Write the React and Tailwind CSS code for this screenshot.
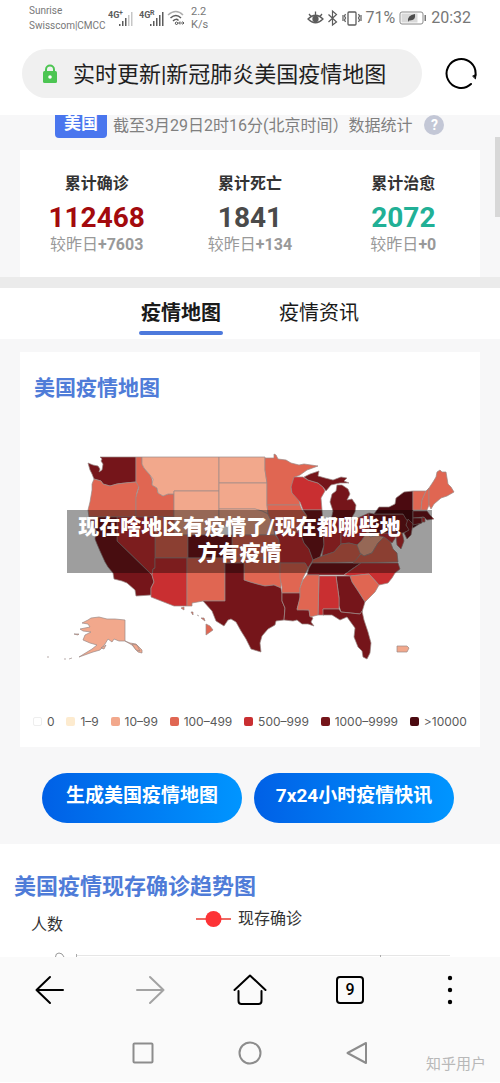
import React, { useState } from 'react';

const stats = [
  { label: '累计确诊', value: '112468', change: '+7603', color: 'text-[#a30a0d]' },
  { label: '累计死亡', value: '1841', change: '+134', color: 'text-[#4a4a4a]' },
  { label: '累计治愈', value: '2072', change: '+0', color: 'text-[#21b096]' },
];

const legend = [
  { label: '0', color: 'bg-white border border-[#eeeeee]' },
  { label: '1–9', color: 'bg-[#fdebcf]' },
  { label: '10–99', color: 'bg-[#f2a88c]' },
  { label: '100–499', color: 'bg-[#e06652]' },
  { label: '500–999', color: 'bg-[#c92f31]' },
  { label: '1000–9999', color: 'bg-[#75151a]' },
  { label: '>10000', color: 'bg-[#4b0a10]' },
];

const C10 = '#f2a88c';
const C100 = '#e06652';
const C500 = '#c92f31';
const C1000 = '#75151a';
const C10000 = '#4b0a10';

const states = [
  ['WA', C1000, 'M88 463L93 465 98 466 100 469 99 472 102 470 103 464 101 461 102 459 100 457H136V482L125 483 117 484 110 486 103 484 101 481 94 479 92 474 90 470Z'],
  ['OR', C100, 'M94 479L101 481 103 484 110 486 117 484 125 483 136 482 139 486 137 492 136 497V517H89L88 510 90 502 92 490 92 484Z'],
  ['ID', C100, 'M136 457H142V464L144 468 150 475 152 479 152 485 157 488 158 493 163 496 168 494 174 494V517H136V497L139 487 136 482Z'],
  ['MT', C10, 'M142 457H219V491H174V494L168 494 163 496 158 493 157 488 152 485 153 479 150 475 144 468 142 464Z'],
  ['WY', C10, 'M174 491H219V535H174Z'],
  ['ND', C10, 'M219 457H265L265 470 267 483H219Z'],
  ['SD', C10, 'M219 483H267L267 505 268 514 262 511 255 509H219Z'],
  ['NE', C10, 'M219 509H255L262 511 268 514 272 522 275 535H232V526H219Z'],
  ['KS', C100, 'M232 535H275L279 540V558H232Z'],
  ['UT', C100, 'M155 517H174V535H188V558H155Z'],
  ['CO', C1000, 'M188 535H232V558H188Z'],
  ['NV', C500, 'M117 517H155V568L153 569 152 575 117 541Z'],
  ['CA', C1000, 'M89 517H117V541L152 575 154 582 151 588 151 595 136 596 135 590 127 583 122 581 114 579 113 573 108 567 105 562 100 551 97 544 95 539 96 530 91 522Z'],
  ['AZ', C500, 'M155 558H187V606H174L151 597 151 588 154 582 152 575 153 569 155 568Z'],
  ['NM', C100, 'M187 558H225V601H203L192 603V606H187Z'],
  ['OK', C100, 'M225 558H280L281 570V588L274 585 265 586 257 584 250 582 244 580V563H225Z'],
  ['TX', C1000, 'M225 563H244V580L250 582 257 584 265 586 274 585 281 588 282 593V601L285 608 284 620 276 621 275 625 268 629 262 636 260 643 261 652 251 649 246 639 241 631 236 622 231 619 228 620 224 626 216 621 212 611 203 601H225Z'],
  ['MN', C100, 'M265 458H274V454L276 455 278 459 286 460 291 463 299 465 304 464 318 466 307 470 300 475 295 477 295 481 291 487 292 493 299 500 300 505H267L267 483 265 470Z'],
  ['IA', C100, 'M267 505H300L302 510 307 516 304 525 301 533 275 534 272 522 268 514Z'],
  ['MO', C500, 'M275 533L300 532 304 543 309 549 313 560 308 568 305 563H280L279 540Z'],
  ['AR', C100, 'M280 563H305L308 568 303 578 300 588V593H282V587L280 578Z'],
  ['LA', C1000, 'M282 593H300L300 599 297 609 309 610 310 616 313 618 311 622 314 626 308 624 302 624 297 620 293 621 284 620 285 608 282 601Z'],
  ['WI', C500, 'M294 477L303 477 308 480 318 483 323 487 325 491 321 498 322 510H303L300 502 292 493 291 487Z'],
  ['MI upper', C1000, 'M304 477L310 474 319 471 318 476 325 478 333 480 341 477 347 478 344 481 349 483 340 483 331 485 326 491 323 487 318 483 308 480Z'],
  ['MI lower', C1000, 'M337 485L342 485 348 489 350 494 347 500 352 499 356 505 355 512 351 519 331 520 333 511 330 502 332 494 336 491Z'],
  ['IL', C1000, 'M303 510H322L324 545 320 557 313 560 309 549 304 543 300 532 304 525 307 516Z'],
  ['IN', C500, 'M323 519H341V544L334 552 322 556 324 545Z'],
  ['OH', C500, 'M341 519L352 520 360 517 369 513V529L362 540 357 545 349 543 341 544Z'],
  ['KY', C100, 'M312 563L313 560 322 556 334 552 341 544 349 543 357 545 361 553 355 562Z'],
  ['TN', C1000, 'M312 563H361L352 569 344 575H307L309 568Z'],
  ['WV', C10, 'M357 545L362 540 369 529 370 537 380 535 384 537 378 543 372 553 364 556 360 553Z'],
  ['VA', C100, 'M353 563L361 554 364 556 372 553 378 543 384 537 390 541 393 549 397 553 398 562Z'],
  ['MD', C500, 'M370 534L402 532 404 541 401 549 397 545 396 537 392 543 384 537Z'],
  ['NC', C500, 'M361 563H398L400 569 395 573 392 578 388 583 379 585 369 574 350 576 344 575Z'],
  ['SC', C100, 'M350 576L369 574 379 585 375 592 365 602 358 591 352 582Z'],
  ['GA', C1000, 'M336 576H350L352 582 358 591 365 602 362 612 360 614 341 612 339 606V598Z'],
  ['AL', C500, 'M319 576H336L339 598V609H323L324 615H318Z'],
  ['MS', C100, 'M307 575H319L318 615 310 617 309 610H297L300 597V588L303 580Z'],
  ['FL', C1000, 'M323 609H339L341 612 360 614 362 611 364 620 368 632 371 643 370 653 367 659 363 657 362 651 358 647 354 637 355 628 347 617 340 620 332 615 323 615Z'],
  ['PA', C1000, 'M369 513L374 514H406L410 520 406 525 410 530 403 533H369Z'],
  ['NY', C10000, 'M374 514L379 507 389 507 395 504 396 498 404 492 413 491V524L421 523 413 528 406 519 403 514Z'],
  ['NJ', C1000, 'M408 519L413 524 411 535 407 539 404 533 409 530 406 525Z'],
  ['VT', C100, 'M413 491H426L422 500 421 510H413Z'],
  ['NH', C100, 'M426 491L429 488V505L427 510H421L422 500Z'],
  ['ME', C100, 'M429 488L433 482 436 477 437 472 440 470 442 472 446 472 448 484 451 487 454 492 447 496 441 498 434 504 431 509 429 505Z'],
  ['MA', C1000, 'M413 511H427L430 515 434 519 427 520 424 517 413 518Z'],
  ['CT', C1000, 'M413 518H422V523L413 525Z'],
  ['RI', C500, 'M422 517L425 518 425 522 422 522Z'],
  ['AK', C10, 'M82 623L88 620 91 618 99 617 107 619 115 619 125 620V641L130 643 136 644 142 650 142 653 138 652 132 645 125 641 119 641 114 639 112 642 108 639 105 644 100 650 93 652 79 657 92 649 97 645 90 643 83 640 85 635 91 632 83 631 80 629 90 627 88 624Z'],
  ['AK islands', C10, 'M74 634L79 634 78 635ZM101 648L106 645 104 649ZM64 659H66M69 659L72 658M47 657H49M132 644L137 645 140 651 136 650Z'],
  ['HI', C100, 'M181 608L184 607 184 610ZM191 612L193 612 193 615ZM197 615L199 616M201 618L204 618 205 621ZM206 624L210 626 213 630 206 635Z'],
  ['PR', C10, 'M397 646H407L409 648 407 652H397Z'],
];

function UsMap() {
  return (
    <svg viewBox="20 430 460 240" className="block w-full" role="img" aria-label="美国疫情地图">
      {states.map(([name, fill, d]) => (
        <path key={name} d={d} fill={fill} stroke="#9b8a86" strokeWidth="0.7" strokeLinejoin="round" />
      ))}
    </svg>
  );
}

function Signal({ label, sup, faded }) {
  return (
    <svg width="28" height="18" viewBox="0 0 28 18" fill="#5c5c5c">
      <text x="0" y="9" fontSize="9" fontWeight="700" fontFamily="Roboto, sans-serif">{label}</text>
      <text x="11" y="6" fontSize="7" fontWeight="700" fontFamily="Roboto, sans-serif">{sup}</text>
      <path d="M11 15h1.5v2H11zM14 12h1.5v5H14zM17 9h1.5v8H17z" />
      <path d="M20 6h1.5v11H20zM23 3h1.500v14H23z" opacity={faded ? 0.35 : 1} />
    </svg>
  );
}

function StatusBar() {
  return (
    <div className="flex h-9 items-center justify-between pr-[29px] pl-[29px] text-[#777777]">
      <div className="flex items-center">
        <div className="w-[79px] text-[10px] leading-[15px] whitespace-nowrap">
          <div>Sunrise</div>
          <div>Swisscom|CMCC</div>
        </div>
        <Signal label="4G" sup="+" faded />
        <span className="w-[3px]" />
        <Signal label="4G" sup="R" />
        <svg width="20" height="18" viewBox="0 0 20 18" fill="none" stroke="#5c5c5c" strokeWidth="1.500">
          <path d="M1 6Q9 -1 16 6" opacity=".5" />
          <path d="M3.500 9Q9 4 14 9M6 12Q9 9 11.500 11.500" />
          <path d="M8 14l1.500-1 1.500 1-1.500 2zM12 14h5M13 12.500L11.500 14l1.500 1.500M15.500 12.500L17 14l-1.500 1.500" strokeWidth="1" />
        </svg>
        <div className="ml-1 text-[11px] leading-[13px]">
          <div>2.2</div>
          <div>K/s</div>
        </div>
      </div>
      <div className="flex items-center text-base">
        <svg width="56" height="18" viewBox="0 0 56 18" fill="none" stroke="#5c5c5c" strokeWidth="1.300">
          <path d="M1 10Q8.500 2.500 16 10 8.500 17.500 1 10ZM2 5l2 2.500M8.500 2.500v3M15 5l-2 2.500" />
          <circle cx="8.500" cy="10" r="2.500" fill="#5c5c5c" />
          <path d="M21.500 5.500l8 7.500-4 3V2l4 3.500-8 7.500" strokeWidth="1.200" />
          <rect x="41" y="3" width="8" height="13" rx="1" />
          <path d="M38.500 5l-1 2 1 2-1 2 1 2M36 6v6M51.500 5l1 2-1 2 1 2-1 2M54 6v6" strokeWidth="1.200" />
        </svg>
        <span className="ml-[2px]">71%</span>
        <svg width="28" height="14" viewBox="0 0 28 14" className="mx-1">
          <rect x="1" y="1" width="23" height="12" rx="2" fill="#fff" stroke="#8a8a8a" />
          <rect x="2.500" y="2.500" width="16" height="9" fill="#d9d9d9" />
          <path d="M9 11Q8 4 16 3 17 10 10 9.500Z" fill="#4d4d4d" />
          <rect x="25.500" y="4" width="1.500" height="6" fill="#777" />
        </svg>
        <span>20:32</span>
      </div>
    </div>
  );
}

function AddressBar() {
  return (
    <div className="flex items-center pt-[13px] pr-[22px] pb-[17px] pl-[22px]">
      <label className="flex h-[49px] min-w-0 flex-1 items-center rounded-full bg-[#f0f0f0] pl-5">
        <svg width="16" height="20" viewBox="0 0 16 20" className="mr-[15px] shrink-0" aria-hidden="true">
          <path d="M4 9V5.500a4 4 0 0 1 8 0V9" fill="none" stroke="#4cc552" strokeWidth="2" />
          <rect x="1" y="7" width="14" height="12" rx="1.500" fill="#4cc552" />
          <circle cx="8" cy="13" r="1.800" fill="#fff" />
        </svg>
        <input
          type="text"
          aria-label="网址"
          defaultValue="实时更新|新冠肺炎美国疫情地图"
          className="min-w-0 flex-1 bg-transparent pt-[2px] text-[22px] leading-8 text-[#1f1f1f] outline-none"
        />
      </label>
      <button type="button" aria-label="刷新" className="ml-[22px] shrink-0">
        <svg width="34" height="34" viewBox="0 0 34 34" fill="none" stroke="#000" strokeWidth="2" strokeLinecap="round">
          <path d="M27 27A14.500 14.500 0 1 1 31.500 18" />
          <path d="M29 19L32 17.500 31.500 21.500Z" fill="#000" strokeWidth="1" />
        </svg>
      </button>
    </div>
  );
}

function Summary() {
  return (
    <section className="relative">
      <div className="flex items-start pl-[55px]">
        <span className="h-[23px] w-[52px] rounded-b bg-[#4a76ee] text-center text-[17px] leading-4 font-bold text-white">美国</span>
        <p className="ml-[6px] text-base leading-[22px] whitespace-nowrap text-[#808080]">截至3月29日2时16分(北京时间）数据统计</p>
        <button type="button" aria-label="说明" className="ml-3 h-5 w-5 rounded-full bg-[#c3c7d6] text-sm leading-5 font-bold text-white">?</button>
      </div>
      <div className="mx-5 mt-3 grid grid-cols-3 bg-white pt-[22px] pb-[21px]">
        {stats.map((s) => (
          <div key={s.label} className="text-center">
            <div className="text-base leading-6 font-bold text-[#333333]">{s.label}</div>
            <div className={`pt-[2px] text-[28px] leading-10 font-bold ${s.color}`}>{s.value}</div>
            <div className="-mt-1 text-base leading-[22px] text-[#999999]">
              较昨日<b>{s.change}</b>
            </div>
          </div>
        ))}
      </div>
      <div className="absolute top-[22px] right-0 h-20 w-[5px] bg-[#d8d8d8]" />
    </section>
  );
}

function Tabs() {
  const [tab, setTab] = useState('疫情地图');
  return (
    <div className="border-t-[11px] border-[#ebebeb] bg-white">
      <div role="tablist" className="flex h-[51px] justify-center gap-[54px]">
        {['疫情地图', '疫情资讯'].map((name) => (
          <button
            key={name}
            type="button"
            role="tab"
            aria-selected={tab === name}
            onClick={() => setTab(name)}
            className="flex w-[84px] flex-col items-center pt-[9px] text-xl leading-8 text-[#1a1a1a] aria-selected:font-bold"
          >
            {name}
            {tab === name && <span className="mt-[2px] h-1 w-full rounded-sm bg-[#4d79dc]" />}
          </button>
        ))}
      </div>
    </div>
  );
}

function MapCard() {
  return (
    <section className="relative mx-5 mt-[13px] bg-white pt-5 pb-[17px]">
      <h2 className="pl-[14px] text-[21px] leading-8 font-bold text-[#4f7cd8]">美国疫情地图</h2>
      <div className="pt-[26px] pb-[43px]">
        <UsMap />
      </div>
      <ul className="flex justify-between pr-[13px] pl-[13px] font-[Inter,sans-serif] text-[12px] leading-[17px] text-[#5a5a5a]">
        {legend.map((l) => (
          <li key={l.label} className="flex items-center gap-[5px] whitespace-nowrap">
            <span className={`h-[9px] w-[9px] rounded-[2px] ${l.color}`} />
            {l.label}
          </li>
        ))}
      </ul>
      <div className="absolute top-[158px] right-12 left-[47px] bg-black/38 pt-1 pr-[29px] pb-[7px] pl-[9px] text-center text-[21px] leading-[26px] font-black text-white">
        现在啥地区有疫情了/现在都哪些地
        <br />
        方有疫情
      </div>
    </section>
  );
}

function Trend() {
  return (
    <section className="mt-[21px] bg-white pt-[27px]">
      <h2 className="pl-[14px] text-[22px] leading-8 font-bold text-[#4f7cd8]">美国疫情现存确诊趋势图</h2>
      <div className="flex items-start pl-[31px] text-base leading-6 text-[#333333]">
        <span className="mt-[10px]">人数</span>
        <span className="mt-1 ml-[133px] flex items-center gap-[7px]">
          <svg width="35" height="18" viewBox="0 0 35 18">
            <path d="M0 9h35" stroke="#ee6a63" strokeWidth="2" />
            <circle cx="17.500" cy="9" r="8" fill="#fd3336" />
          </svg>
          现存确诊
        </span>
      </div>
      <svg viewBox="0 0 500 20" className="block w-full" fill="none">
        <path d="M76 18.500H450" stroke="#e6e6e6" />
        <path d="M76.500 17v3M380.500 18v2" stroke="#aaa" />
        <path d="M55.500 20q0-4 3.500-4t5 4" stroke="#999" />
      </svg>
    </section>
  );
}

function BottomNav() {
  return (
    <footer className="relative bg-[#fafafa] pt-4 pb-[17px]">
      <div className="grid grid-cols-5 justify-items-center">
        <button type="button" aria-label="后退">
          <svg width="34" height="34" viewBox="0 0 34 34" fill="none" stroke="#000" strokeWidth="2" strokeLinecap="round" strokeLinejoin="round">
            <path d="M30 17H3.500M17 4L3.500 17 17 30" />
          </svg>
        </button>
        <button type="button" aria-label="前进">
          <svg width="34" height="34" viewBox="0 0 34 34" fill="none" stroke="#a3a3a3" strokeWidth="2" strokeLinecap="round" strokeLinejoin="round">
            <path d="M4 17h26.500M17 4l13.500 13L17 30" />
          </svg>
        </button>
        <button type="button" aria-label="主页">
          <svg width="34" height="34" viewBox="0 0 34 34" fill="none" stroke="#000" strokeWidth="2" strokeLinecap="round" strokeLinejoin="round">
            <path d="M1.500 17L17 2.500 32.500 17M5.500 18v10q0 3 3 3h17q3 0 3-3V18" />
          </svg>
        </button>
        <button type="button" aria-label="标签页" className="my-[3px] h-7 w-7 rounded-[4px] border-2 border-black text-base leading-6 font-medium text-black">9</button>
        <button type="button" aria-label="菜单">
          <svg width="34" height="34" viewBox="0 0 34 34">
            <circle cx="17" cy="5" r="2.200" />
            <circle cx="17" cy="17" r="2.200" />
            <circle cx="17" cy="29" r="2.200" />
          </svg>
        </button>
      </div>
      <div className="mt-[34px] flex justify-center gap-[83px]">
        <button type="button" aria-label="最近任务">
          <svg width="24" height="24" viewBox="0 0 24 24" fill="none" stroke="#8c8c8c" strokeWidth="2">
            <rect x="2.500" y="2.500" width="19" height="19" rx="1" />
          </svg>
        </button>
        <button type="button" aria-label="桌面">
          <svg width="24" height="24" viewBox="0 0 24 24" fill="none" stroke="#8c8c8c" strokeWidth="2">
            <circle cx="12" cy="12" r="10.500" />
          </svg>
        </button>
        <button type="button" aria-label="返回">
          <svg width="24" height="24" viewBox="0 0 24 24" fill="none" stroke="#8c8c8c" strokeWidth="2" strokeLinejoin="round">
            <path d="M21 2v20L2.500 12Z" />
          </svg>
        </button>
      </div>
      <span className="absolute right-[14px] bottom-[6px] text-[15px] leading-6 text-[#b8b8b8]">知乎用户</span>
    </footer>
  );
}

function App() {
  return (
    <div className="w-full overflow-hidden bg-[#f7f7f8] font-[Roboto,'Noto_Sans_CJK_SC',sans-serif]">
      <header className="bg-white">
        <StatusBar />
        <AddressBar />
      </header>
      <main>
        <Summary />
        <Tabs />
        <MapCard />
        <div className="mt-[26px] flex justify-center gap-3 pr-[46px] pl-[42px]">
          {['生成美国疫情地图', '7x24小时疫情快讯'].map((name) => (
            <button
              key={name}
              type="button"
              className="h-[50px] flex-1 rounded-full bg-linear-to-r from-[#0060e6] to-[#0095ff] pb-1 text-[19px] font-bold whitespace-nowrap text-white"
            >
              {name}
            </button>
          ))}
        </div>
        <Trend />
      </main>
      <BottomNav />
    </div>
  );
}

export default App;
